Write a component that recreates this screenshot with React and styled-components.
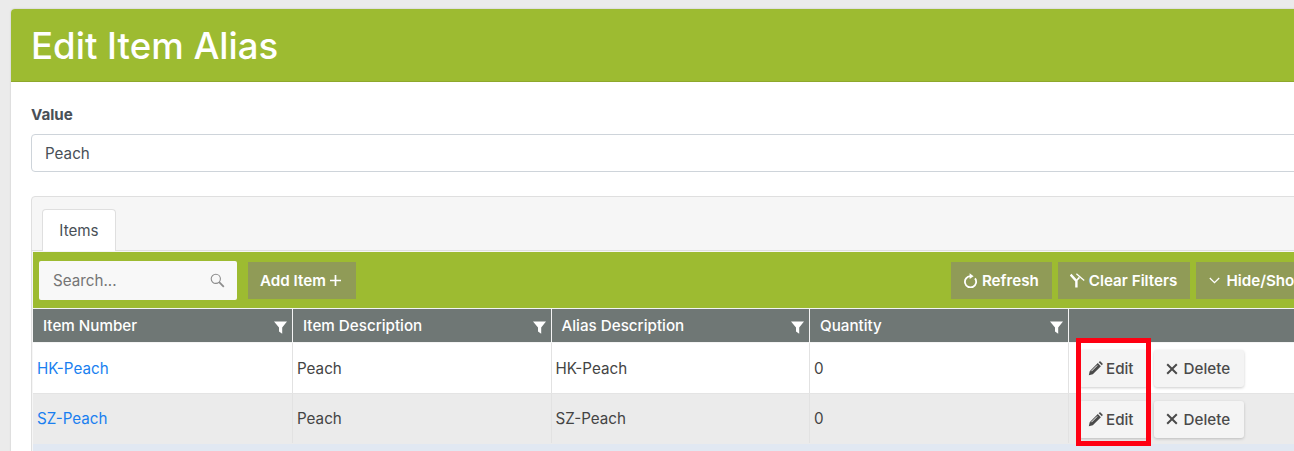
import React from "react";
import styled, { createGlobalStyle } from "styled-components";

const GlobalStyle = createGlobalStyle`
  html, body {
    margin: 0;
    height: 100%;
    overflow: hidden;
    background: #ebebeb;
    font-family: Inter, "Liberation Sans", sans-serif;
    color: #495057;
  }
`;

const rows = [
  { number: "HK-Peach", description: "Peach", alias: "HK-Peach", quantity: "0" },
  { number: "SZ-Peach", description: "Peach", alias: "SZ-Peach", quantity: "0" },
];

const columns = ["Item Number", "Item Description", "Alias Description", "Quantity"];

const FilterIcon = () => (
  <svg width="13" height="13" viewBox="0 0 13 13">
    <path d="M0 .5h13L8.2 6.4V12.8L5 10.6V6.4z" fill="#fff" />
  </svg>
);

const PencilIcon = () => (
  <svg width="15" height="15" viewBox="0 0 15 15">
    <path
      d="M.8 14.2l.9-4L9.8 2.1l3.1 3.1-8.1 8.1zM10.7 1.2l.8-.7c.3-.3.7-.3 1 0l2 2c.3.3.3.7 0 1l-.7.8z"
      fill="#4a4a4a"
    />
    <path d="M3.4 10.2l5.8-5.8" stroke="#f4f4f4" strokeWidth="1" />
  </svg>
);

const RefreshIcon = () => (
  <svg width="15" height="15" viewBox="0 0 15 15" fill="none">
    <path d="M12 5.4A5.6 5.6 0 1 1 7.4 3.2" stroke="#fff" strokeWidth="1.8" />
    <path d="M6.6 .2L10.6 3.2 6.6 6z" fill="#fff" />
  </svg>
);

const ClearFilterIcon = () => (
  <svg width="15" height="15" viewBox="0 0 15 15" fill="none" stroke="#fff">
    <path d="M.6 1.6L6.4 8v6.6" strokeWidth="2.4" />
    <path d="M6.8 7.2L9.4 4.4" strokeWidth="1.6" />
    <path d="M6.4 .8L14.2 7.4" strokeWidth="1.3" />
  </svg>
);

const ChevronIcon = () => (
  <svg width="11" height="7" viewBox="0 0 11 7" fill="none" stroke="#fff" strokeWidth="1.3">
    <path d="M.8 1l4.7 4.7L10.2 1" />
  </svg>
);

const PlusIcon = () => (
  <svg width="11" height="11" viewBox="0 0 11 11" stroke="#fff" strokeWidth="1.7">
    <path d="M5.5 0v11M0 5.5h11" />
  </svg>
);

const CrossIcon = () => (
  <svg width="12" height="12" viewBox="0 0 12 12" stroke="#4a4a4a" strokeWidth="2">
    <path d="M1.2 1.2l9.6 9.6M10.8 1.2l-9.6 9.6" />
  </svg>
);

const SearchIcon = () => (
  <svg width="15" height="15" viewBox="0 0 15 15" fill="none" stroke="#8c8c8c">
    <circle cx="5.8" cy="5.8" r="4.6" strokeWidth="1.1" />
    <path d="M9.2 9.2l4.6 4.6" strokeWidth="1.8" />
  </svg>
);

const App = () => {
  return (
    <>
      <GlobalStyle />
      <Page>
        <Card>
          <CardHeader>
            <h1>Edit Item Alias</h1>
          </CardHeader>
          <CardBody>
            <FieldLabel>Value</FieldLabel>
            <ValueInput>Peach</ValueInput>
            <TabPanel>
              <TabStrip>
                <Tab>Items</Tab>
              </TabStrip>
              <Toolbar>
                <SearchBox>
                  <span>Search...</span>
                  <SearchIcon />
                </SearchBox>
                <ToolButton $right={15}>
                  Add Item
                  <PlusIcon />
                </ToolButton>
                <ToolbarRight>
                  <ToolButton>
                    <RefreshIcon />
                    Refresh
                  </ToolButton>
                  <ToolButton>
                    <ClearFilterIcon />
                    Clear Filters
                  </ToolButton>
                  <ToolButton $left={13} $gap={6}>
                    <ChevronIcon />
                    Hide/Show Columns
                  </ToolButton>
                </ToolbarRight>
              </Toolbar>
              <Grid>
                <HeaderRow>
                  {columns.map((label) => (
                    <HeaderCell key={label}>
                      <span>{label}</span>
                      <FilterIcon />
                    </HeaderCell>
                  ))}
                  <HeaderCell />
                </HeaderRow>
                {rows.map((row, i) => (
                  <Row key={row.number} $striped={i % 2 === 1}>
                    <Cell>
                      <ItemLink>{row.number}</ItemLink>
                    </Cell>
                    <Cell>{row.description}</Cell>
                    <Cell>{row.alias}</Cell>
                    <Cell>{row.quantity}</Cell>
                    <ActionCell>
                      <ActionButton>
                        <PencilIcon />
                        Edit
                      </ActionButton>
                      <ActionButton $left={12} $gap={6}>
                        <CrossIcon />
                        Delete
                      </ActionButton>
                    </ActionCell>
                  </Row>
                ))}
                <SelectedStrip />
                <Highlight />
              </Grid>
            </TabPanel>
          </CardBody>
        </Card>
      </Page>
    </>
  );
};

export default App;

const gridColumns = "260px 258.5px 258.5px 259px 259px";

const Page = styled.div`
  width: 1600px;
  padding: 9px 0 0 11px;
`;

const Card = styled.div`
  background: #fff;
  border-radius: 4px 4px 0 0;
  box-shadow: 0 0 2px rgba(0, 0, 0, 0.2);
`;

const CardHeader = styled.div`
  height: 73px;
  box-sizing: border-box;
  padding: 2px 0 0 20px;
  display: flex;
  align-items: center;
  background: #9dbb31;
  border-bottom: 1px solid #8ea82c;
  border-radius: 4px 4px 0 0;

  h1 {
    margin: 0;
    font-size: 36.6px;
    font-weight: 500;
    line-height: 1;
    color: #fff;
  }
`;

const CardBody = styled.div`
  padding: 24px 20px 0;
`;

const FieldLabel = styled.label`
  display: block;
  font-size: 15.2px;
  font-weight: 700;
  line-height: 17px;
  margin-bottom: 11px;
`;

const ValueInput = styled.div`
  height: 38px;
  box-sizing: border-box;
  padding-left: 13px;
  display: flex;
  align-items: center;
  font-size: 15.2px;
  border: 1px solid #ced4da;
  border-radius: 4px;
  background: #fff;
`;

const TabPanel = styled.div`
  margin-top: 24px;
  border: 1px solid #dfdfdf;
  border-radius: 4px 4px 0 0;
  background: #f6f6f6;
`;

const TabStrip = styled.div`
  height: 54px;
  box-sizing: border-box;
  padding: 12px 0 0 10px;
  display: flex;
  border-bottom: 1px solid #dfdfdf;
`;

const Tab = styled.div`
  width: 74px;
  height: 42px;
  box-sizing: border-box;
  display: flex;
  align-items: center;
  justify-content: center;
  font-size: 15.2px;
  background: #fff;
  border: 1px solid #dfdfdf;
  border-bottom: none;
  border-radius: 4px 4px 0 0;
`;

const Toolbar = styled.div`
  height: 56px;
  box-sizing: border-box;
  margin: 1px 0 0 1px;
  padding: 0 0 0 6px;
  display: flex;
  align-items: center;
  gap: 11px;
  background: #9dbb31;
`;

const SearchBox = styled.div`
  width: 198px;
  height: 39px;
  box-sizing: border-box;
  padding: 0 12px 0 14px;
  display: flex;
  align-items: center;
  justify-content: space-between;
  font-size: 15.2px;
  color: #757575;
  background: #f8f8f8;
  border-radius: 2px;
`;

const ToolbarRight = styled.div`
  margin-left: 584px;
  display: flex;
  gap: 6px;
`;

const ToolButton = styled.div`
  height: 37px;
  box-sizing: border-box;
  padding: 0 ${(pr) => (pr.$right ? pr.$right : 13)}px 0 ${(pr) => (pr.$left ? pr.$left : 12)}px;
  display: flex;
  align-items: center;
  gap: ${(pr) => (pr.$gap ? pr.$gap : 4)}px;
  font-size: 15.2px;
  font-weight: 600;
  white-space: nowrap;
  color: #fff;
  background: #909b57;
`;

const Grid = styled.div`
  position: relative;
  margin-left: 1px;
  background: #e1e8f2;
`;

const HeaderRow = styled.div`
  display: grid;
  grid-template-columns: ${gridColumns};
  height: 35px;
  border-top: 1px solid #f4f4f4;
  border-bottom: 1px solid #f4f4f4;
  box-sizing: border-box;
  background: #6f7775;
`;

const HeaderCell = styled.div`
  padding: 0 5px 0 10px;
  display: flex;
  align-items: center;
  justify-content: space-between;
  font-size: 15.2px;
  font-weight: 500;
  color: #fff;
  border-right: 1px solid #f4f4f4;
  box-sizing: border-box;

  svg {
    margin-top: 4px;
  }
`;

const Row = styled.div`
  display: grid;
  grid-template-columns: ${gridColumns};
  height: 50.5px;
  box-sizing: border-box;
  background: ${(pr) => (pr.$striped ? "#ebebeb" : "#fff")};
  border-bottom: 1px solid ${(pr) => (pr.$striped ? "#ebebeb" : "#e4e4e4")};
`;

const Cell = styled.div`
  padding: 0.6px 0 0 4px;
  display: flex;
  align-items: center;
  font-size: 15.2px;
  color: #444;
  border-right: 1px solid #e2e2e2;
  box-sizing: border-box;
`;

const ActionCell = styled(Cell)`
  padding: 1.5px 0 0 10px;
  gap: 6px;
  border-right: none;
`;

const ItemLink = styled.a`
  color: #1a7ff0;
  cursor: pointer;
`;

const ActionButton = styled.div`
  height: 37px;
  box-sizing: border-box;
  padding: 0 14px 0 ${(pr) => (pr.$left ? pr.$left : 9)}px;
  display: flex;
  align-items: center;
  gap: ${(pr) => (pr.$gap ? pr.$gap : 3)}px;
  font-size: 15.2px;
  font-weight: 500;
  color: #4a4a4a;
  background: #f4f4f4;
  border-radius: 3px;
  box-shadow: 0 1px 3px rgba(0, 0, 0, 0.2);
`;

const SelectedStrip = styled.div`
  height: 30px;
  background: #e1e8f2;
`;

const Highlight = styled.div`
  position: absolute;
  left: 1043px;
  top: 30px;
  width: 75px;
  height: 108px;
  box-sizing: border-box;
  border: 5px solid #ff0012;
  pointer-events: none;
`;
